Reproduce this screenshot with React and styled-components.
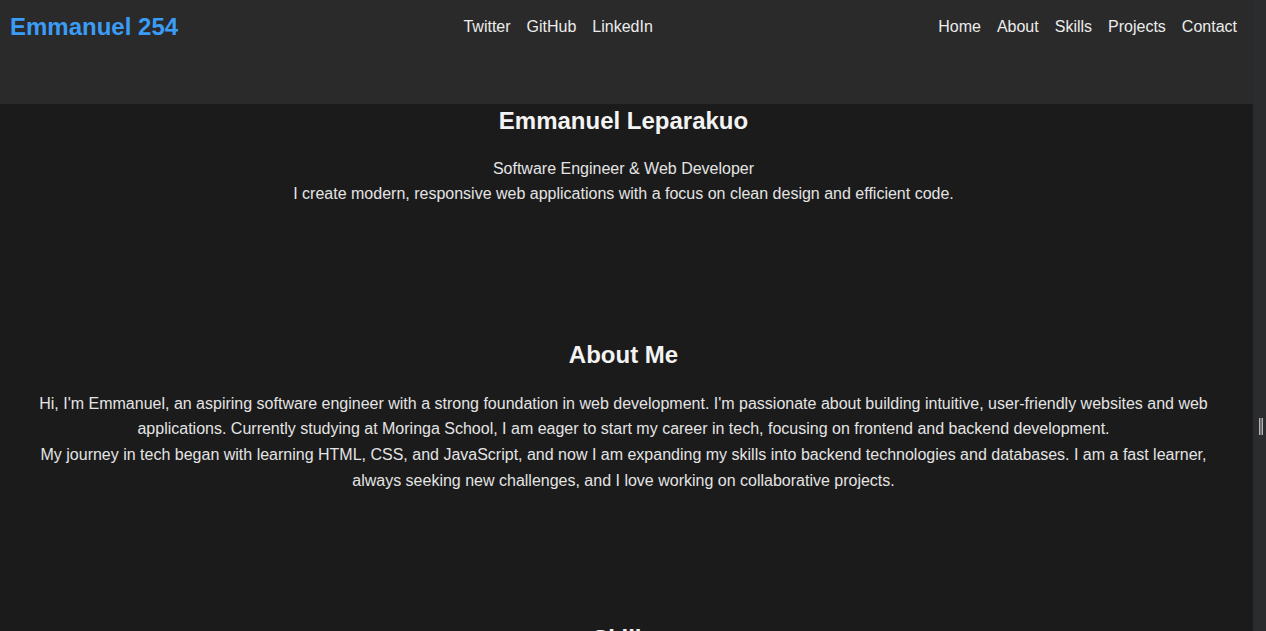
import React from 'react'
import styled, { createGlobalStyle } from 'styled-components'

const GlobalStyle = createGlobalStyle`
  html, body {
    margin: 0;
    padding: 0;
    background: #1b1b1b;
    font-family: "Liberation Sans", Arial, sans-serif;
    overflow: hidden;
  }
`

const Page = styled.div`
  margin-right: 13px;
  background: #1b1b1b;
  color: #e6e6e6;
`

const Header = styled.header`
  height: 104px;
  box-sizing: border-box;
  padding: 13px 16px 0 10px;
  background: #2a2a2a;
  display: flex;
  justify-content: space-between;
  align-items: flex-start;
`

const Logo = styled.a`
  font-size: 24px;
  font-weight: 700;
  color: #3b9cf6;
  text-decoration: none;
  line-height: 27.6px;
`

const LinkGroup = styled.nav`
  display: flex;
  gap: 16px;
  padding-top: 5px;
`

const NavLink = styled.a`
  font-size: 16px;
  color: #ececec;
  text-decoration: none;
  line-height: 18.4px;
`

const Section = styled.section`
  padding: ${({ $top }) => $top}px 43px ${({ $bottom }) => $bottom}px 37px;
  text-align: center;
`

const Title = styled.h1`
  margin: 0 0 20px;
  font-size: 24px;
  line-height: 1.2;
  font-weight: 700;
  color: #f3f3f3;
`

const Heading = styled.h2`
  margin: 0 0 21px;
  font-size: 24px;
  line-height: 1.2;
  font-weight: 700;
  color: #f3f3f3;
`

const Text = styled.p`
  margin: 0;
  font-size: 16px;
  line-height: 1.6;
  color: #e4e4e4;
`

const SkillList = styled.ul`
  list-style: none;
  margin: 0;
  padding: 0;
  display: flex;
  flex-wrap: wrap;
  justify-content: center;
  gap: 12px;
`

const Skill = styled.li`
  padding: 8px 16px;
  background: #2a2a2a;
  border-radius: 4px;
  font-size: 16px;
`

const ScrollTrack = styled.div`
  position: fixed;
  top: 0;
  right: 0;
  width: 13px;
  height: 100vh;
  background: #2b2c2e;
`

const ScrollThumb = styled.div`
  position: absolute;
  top: 418px;
  left: 6px;
  width: 2px;
  height: 17px;
  background: #6b6b6b;
  border-left: 1px solid #b4b4b4;
  border-right: 1px solid #b4b4b4;
`

const socials = ['Twitter', 'GitHub', 'LinkedIn']
const menu = ['Home', 'About', 'Skills', 'Projects', 'Contact']
const skills = ['HTML', 'CSS', 'JavaScript', 'React', 'Python', 'SQL']

export default function App() {
  return (
    <>
      <GlobalStyle />
      <Page>
        <Header>
          <Logo href="#">Emmanuel 254</Logo>
          <LinkGroup>
            {socials.map(s => <NavLink key={s} href="#">{s}</NavLink>)}
          </LinkGroup>
          <LinkGroup>
            {menu.map(m => <NavLink key={m} href="#">{m}</NavLink>)}
          </LinkGroup>
        </Header>

        <Section $top={3} $bottom={69}>
          <Title>Emmanuel Leparakuo</Title>
          <Text>Software Engineer &amp; Web Developer</Text>
          <Text>I create modern, responsive web applications with a focus on clean design and efficient code.</Text>
        </Section>

        <Section $top={65} $bottom={67}>
          <Heading>About Me</Heading>
          <Text>
            Hi, I'm Emmanuel, an aspiring software engineer with a strong foundation in web development. I'm passionate about building intuitive, user-friendly websites and web applications. Currently studying at Moringa School, I am eager to start my career in tech, focusing on frontend and backend development.
          </Text>
          <Text>
            My journey in tech began with learning HTML, CSS, and JavaScript, and now I am expanding my skills into backend technologies and databases. I am a fast learner, always seeking new challenges, and I love working on collaborative projects.
          </Text>
        </Section>

        <Section $top={65} $bottom={65}>
          <Heading>Skills</Heading>
          <SkillList>
            {skills.map(s => <Skill key={s}>{s}</Skill>)}
          </SkillList>
        </Section>
      </Page>
      <ScrollTrack>
        <ScrollThumb />
      </ScrollTrack>
    </>
  )
}
